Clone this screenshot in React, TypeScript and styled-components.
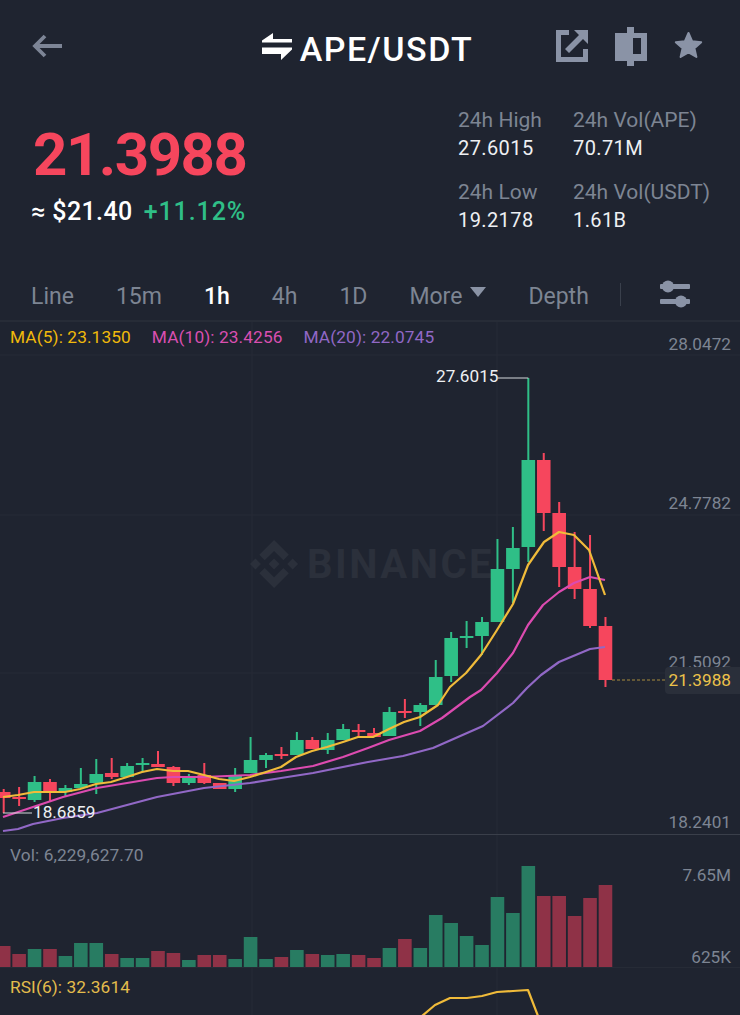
import styled, { createGlobalStyle } from 'styled-components'

const GlobalStyle = createGlobalStyle`
  html, body {
    margin: 0;
    padding: 0;
    background: #1f2430;
  }
`

const GREEN = '#2fbf87'
const RED = '#f6465d'
const VOL_GREEN = '#287c62'
const VOL_RED = '#8f3247'
const GRID = '#262b36'

const Page = styled.div`
  width: 740px;
  height: 1015px;
  overflow: hidden;
  background: #1f2430;
  color: #fff;
  font-family: 'Roboto', sans-serif;
`

const Header = styled.header`
  height: 92px;
  display: grid;
  grid-template-columns: 1fr auto 1fr;
  align-items: center;
  padding: 0 37px 0 32px;
  box-sizing: border-box;
`

const Title = styled.div`
  display: flex;
  align-items: center;
  gap: 8px;
  font-size: 34px;
  font-weight: 500;
  letter-spacing: 1.5px;
`

const TitleText = styled.span`
  margin-top: 6px;
`

const HeaderIcons = styled.div`
  display: flex;
  justify-content: flex-end;
  align-items: center;
  gap: 27px;
`

const Summary = styled.section`
  height: 181px;
  display: flex;
  justify-content: space-between;
  padding: 15px 30px 0 31px;
  box-sizing: border-box;
`

const LastPrice = styled.div`
  font-size: 60px;
  font-weight: 700;
  line-height: 70px;
  margin: 13px 0 0 2px;
  color: ${RED};
  letter-spacing: -1.500px;
`

const PriceSub = styled.div`
  display: flex;
  gap: 11px;
  margin-top: 7px;
  font-size: 25px;
  line-height: 30px;
  font-weight: 500;
`

const Approx = styled.span`
  letter-spacing: 0.4px;
`

const Change = styled.span`
  color: ${GREEN};
  letter-spacing: 0.9px;
`

const Stats = styled.div`
  display: grid;
  grid-template-columns: 115px auto;
  grid-auto-rows: 72px;
`

const Stat = styled.div`
  display: flex;
  flex-direction: column;
  gap: 2px;
`

const StatLabel = styled.span`
  font-size: 21px;
  line-height: 26px;
  color: #7d8593;
`

const StatValue = styled.span`
  font-size: 20px;
  line-height: 26px;
  letter-spacing: 0.4px;
  color: #eef0f3;
`

const Tabs = styled.nav`
  height: 49px;
  display: flex;
  align-items: center;
  gap: 42px;
  padding: 0 0 0 31px;
  box-sizing: border-box;
  border-bottom: 2px solid #272c37;
`

const Tab = styled.span<{ $active?: boolean }>`
  display: flex;
  align-items: center;
  gap: 8px;
  font-size: 23px;
  line-height: 28px;
  color: ${props => (props.$active ? '#fff' : '#7d8593')};
  font-weight: ${props => (props.$active ? 500 : 400)};
`

const Caret = styled.i`
  width: 0;
  height: 0;
  margin-bottom: 10px;
  border-left: 8px solid transparent;
  border-right: 8px solid transparent;
  border-top: 10px solid #8a93a5;
`

const TabDivider = styled.i`
  width: 1px;
  height: 23px;
  margin: -5px 0 0 -11px;
  background: #3a404c;
`

const SettingsSlot = styled.span`
  display: flex;
  margin: -5px 0 0 -3px;
`

const Panel = styled.div<{ $height: number }>`
  position: relative;
  height: ${props => props.$height}px;
`

const ChartSvg = styled.svg`
  display: block;
  width: 740px;
  height: 100%;
  font-family: 'Roboto', sans-serif;
`

const Legend = styled.div<{ $top: number }>`
  position: absolute;
  top: ${props => props.$top}px;
  left: 10px;
  display: flex;
  gap: 21px;
  font-size: 17.300px;
  letter-spacing: 0.1px;
  line-height: 20px;
`

const LegendItem = styled.span<{ $color: string }>`
  color: ${props => props.$color};
`

const PriceTag = styled.span`
  position: absolute;
  top: 345px;
  right: 0;
  width: 75px;
  height: 27px;
  padding-right: 9px;
  box-sizing: border-box;
  text-align: right;
  font-size: 17.200px;
  line-height: 27px;
  color: #ecc24a;
  background: #2a2f3a;
  border-radius: 4px 0 0 4px;
`

const BackIcon = () => (
  <svg width="30" height="24" viewBox="0 0 30 24" fill="none" stroke="#7d8596" strokeWidth="3.800">
    <path d="M13 2 3 12l10 10M3 12h27" />
  </svg>
)

const SwapIcon = () => (
  <svg width="30" height="27" viewBox="0 0 30 27" fill="#fff">
    <path d="M11 0v6h19v3.600H0V7.400zM0 14.400h30v2.200L19 27v-6H0z" />
  </svg>
)

const ShareIcon = () => (
  <svg width="32" height="32" viewBox="0 0 32 32" fill="#8a93a6">
    <path d="M0 0h13v5H5v22h22v-8h5v13H0z" />
    <path d="M18 0H32V14L27 9 13 23 9 19 23 5z" />
  </svg>
)

const CandleIcon = () => (
  <svg width="32" height="39" viewBox="0 0 32 39" fill="#8a93a6">
    <path fillRule="evenodd" d="M12 0h7v6h13v28H19v5h-7v-5H0V6h12zM18 11v16h8V11z" />
  </svg>
)

const StarIcon = () => (
  <svg width="29" height="30" viewBox="0 0 29 30" fill="#8a93a6" stroke="#8a93a6" strokeWidth="2" strokeLinejoin="round">
    <path d="M14.500 2l3.700 8.300 9 .9-6.800 6 2 8.800-7.900-4.600L6.600 26l2-8.800-6.800-6 9-.9z" />
  </svg>
)

const SlidersIcon = () => (
  <svg width="30" height="28" viewBox="0 0 30 28" fill="#8a93a6">
    <rect x="0" y="4" width="30" height="5" rx="1" />
    <rect x="0" y="19" width="30" height="5" rx="1" />
    <circle cx="8" cy="6.500" r="6" />
    <circle cx="21" cy="21.500" r="6" />
  </svg>
)

// [high, body top, body bottom, low, up?] left to right, y in page pixels
type Candle = [number, number, number, number, boolean]

const candles: Candle[] = [
  [789, 792, 798, 813, false],
  [787, 797, 799, 806, false],
  [776, 782, 800, 802, true],
  [779, 782, 792, 802, false],
  [785, 788, 792, 797, true],
  [768, 784, 788, 788, true],
  [759, 774, 783, 794, true],
  [758, 773, 777, 779, false],
  [763, 766, 777, 777, true],
  [758, 763, 765, 771, true],
  [751, 764, 767, 767, false],
  [766, 767, 783, 786, false],
  [774, 777, 783, 785, true],
  [763, 775, 783, 784, false],
  [783, 783, 789, 789, false],
  [768, 776, 789, 792, true],
  [737, 760, 773, 773, true],
  [753, 755, 760, 768, true],
  [747, 754, 756, 759, false],
  [732, 740, 755, 755, true],
  [737, 740, 749, 749, false],
  [733, 740, 750, 754, true],
  [724, 729, 740, 740, true],
  [724, 730, 732, 737, false],
  [728, 733, 737, 737, false],
  [707, 712, 736, 736, true],
  [699, 711, 713, 718, false],
  [703, 705, 712, 726, true],
  [660, 677, 705, 705, true],
  [632, 638, 676, 682, true],
  [621, 636, 638, 648, true],
  [617, 622, 636, 655, true],
  [539, 569, 622, 622, true],
  [527, 548, 569, 603, true],
  [378, 460, 547, 562, true],
  [453, 460, 513, 531, false],
  [502, 513, 567, 587, false],
  [532, 567, 589, 599, false],
  [535, 589, 626, 628, false],
  [617, 626, 680, 687, false],
]

// bar top y per candle, with its own up/down flag
const volumes: [number, boolean][] = [
  [946, false], [954, false], [949, true], [949, false], [956, true], [943, true], [943, true], [954, false],
  [958, true], [958, true], [951, false], [953, false], [960, true], [955, false], [955, false], [959, true],
  [937, true], [959, true], [957, false], [950, true], [954, false], [955, true], [954, true], [955, false],
  [958, false], [948, true], [939, false], [948, true], [915, true], [923, true], [936, true], [945, true],
  [897, true], [913, true], [866, true], [896, false], [896, false], [916, false], [898, false], [885, false],
]

const ma5 = '3,797 18,795 34,792 49,792 65,792 80,789 96,784 111,782 127,777 142,772 157,769 173,771 188,771 204,775 219,779 234,781 250,777 266,772 281,767 296,757 312,751 327,747 343,742 358,737 373,737 389,729 404,722 420,717 438,705 450,687 466,673 481,655 497,630 513,604 528,565 544,542 559,532 574,535 589,550 605,595'
const ma10 = '3,817 33,807 63,797 97,788 127,783 157,778 173,777 204,777 227,776 250,775 281,771 313,766 343,757 368,748 389,740 420,731 442,718 470,697 481,690 497,673 513,653 528,625 543,605 559,592 574,583 590,577 605,580'
const ma20 = '3,831 18,829 33,824 63,818 97,813 127,805 157,797 204,788 250,783 281,778 313,773 368,762 403,756 433,748 458,737 483,726 513,703 527,688 541,675 559,662 590,649 605,647'
const rsi = '422,1016 435,1005 450,998 467,998 482,996 497,992 513,991 528,990 538,1016'

const candleX = (i: number) => 3.7 + 15.43 * i

const GridLines = ({ top, bottom }: { top: number; bottom: number }) => (
  <>
    <line x1="252" x2="252" y1={top} y2={bottom} stroke={GRID} />
    <line x1="497" x2="497" y1={top} y2={bottom} stroke={GRID} />
  </>
)

const AxisLabel = ({ y, children }: { y: number; children: string }) => (
  <text x="731" y={y} textAnchor="end" fontSize="17.200" fill="#7d8593">{children}</text>
)

const MainChart = () => (
  <ChartSvg viewBox="0 322 740 512">
    <GridLines top={322} bottom={834} />
    <line x1="0" x2="740" y1="355" y2="355" stroke={GRID} />
    <line x1="0" x2="740" y1="515" y2="515" stroke={GRID} />
    <line x1="0" x2="740" y1="673" y2="673" stroke={GRID} />

    <g fill="#2b303b">
      <g transform="translate(250 540) scale(0.38)">
        <path d="M38.730 53.200l24.590-24.580 24.600 24.600 14.300-14.310L63.320 0 24.430 38.900z" />
        <path d="M0 63.310l14.300-14.310 14.310 14.310-14.310 14.300z" />
        <path d="M38.730 73.410l24.590 24.590 24.600-24.600 14.310 14.290-38.900 38.910-38.910-38.880z" />
        <path d="M98 63.310l14.300-14.310 14.310 14.300-14.310 14.310z" />
        <path d="M77.830 63.300L63.320 48.780 52.590 59.510l-1.240 1.230-2.540 2.540 14.510 14.500 14.510-14.470z" />
      </g>
      <text x="307" y="578" fontSize="40" fontWeight="700" letterSpacing="2.500">BINANCE</text>
    </g>

    {candles.map(([high, top, bottom, low, up], i) => (
      <g key={i} fill={up ? GREEN : RED}>
        <rect x={candleX(i) - 1} y={high} width="2" height={low - high} />
        <rect x={candleX(i) - 6.800} y={top} width="13.600" height={bottom - top} />
      </g>
    ))}

    <g fill="none" strokeWidth="2.200" strokeLinejoin="round">
      <polyline points={ma20} stroke="#9168c6" />
      <polyline points={ma10} stroke="#dc4bb0" />
      <polyline points={ma5} stroke="#f0bb3a" />
    </g>

    <path d="M498 378h30.300" fill="none" stroke="#d5d8dc" strokeWidth="1" />
    <path d="M3 813h29" fill="none" stroke="#d5d8dc" strokeWidth="1" />
    <text x="436" y="382" fontSize="17.200" fill="#eef0f3">27.6015</text>
    <text x="33" y="818" fontSize="17.200" fill="#eef0f3">18.6859</text>

    <line x1="612" x2="665" y1="680" y2="680" stroke="#a98c3c" strokeDasharray="3 2" />

    <AxisLabel y={350}>28.0472</AxisLabel>
    <AxisLabel y={509}>24.7782</AxisLabel>
    <AxisLabel y={668}>21.5092</AxisLabel>
    <AxisLabel y={828}>18.2401</AxisLabel>
  </ChartSvg>
)

const VolumeChart = () => (
  <ChartSvg viewBox="0 834 740 134">
    <GridLines top={834} bottom={968} />
    <line x1="0" x2="740" y1="834.500" y2="834.500" stroke="#3a3f4a" />
    {volumes.map(([top, up], i) => (
      <rect
        key={i}
        x={candleX(i) - 6.800}
        y={top}
        width="13.600"
        height={968 - top}
        fill={up ? VOL_GREEN : VOL_RED}
      />
    ))}
    <AxisLabel y={881}>7.65M</AxisLabel>
    <AxisLabel y={963}>625K</AxisLabel>
    <line x1="0" x2="740" y1="967.500" y2="967.500" stroke={GRID} />
  </ChartSvg>
)

const RsiChart = () => (
  <ChartSvg viewBox="0 968 740 47">
    <GridLines top={968} bottom={1015} />
    <polyline points={rsi} fill="none" stroke="#f0bb3a" strokeWidth="2.200" strokeLinejoin="round" />
  </ChartSvg>
)

const stats = [
  ['24h High', '27.6015'],
  ['24h Vol(APE)', '70.71M'],
  ['24h Low', '19.2178'],
  ['24h Vol(USDT)', '1.61B'],
]

const App = () => (
  <Page>
    <GlobalStyle />
    <Header>
      <BackIcon />
      <Title>
        <SwapIcon />
        <TitleText>APE/USDT</TitleText>
      </Title>
      <HeaderIcons>
        <ShareIcon />
        <CandleIcon />
        <StarIcon />
      </HeaderIcons>
    </Header>

    <Summary>
      <div>
        <LastPrice>21.3988</LastPrice>
        <PriceSub>
          <Approx>≈ $21.40</Approx>
          <Change>+11.12%</Change>
        </PriceSub>
      </div>
      <Stats>
        {stats.map(([label, value]) => (
          <Stat key={label}>
            <StatLabel>{label}</StatLabel>
            <StatValue>{value}</StatValue>
          </Stat>
        ))}
      </Stats>
    </Summary>

    <Tabs>
      <Tab>Line</Tab>
      <Tab>15m</Tab>
      <Tab $active>1h</Tab>
      <Tab>4h</Tab>
      <Tab>1D</Tab>
      <Tab>More<Caret /></Tab>
      <Tab>Depth</Tab>
      <TabDivider />
      <SettingsSlot><SlidersIcon /></SettingsSlot>
    </Tabs>

    <Panel $height={512}>
      <MainChart />
      <Legend $top={5}>
        <LegendItem $color="#f0b90b">MA(5): 23.1350</LegendItem>
        <LegendItem $color="#d94fb0">MA(10): 23.4256</LegendItem>
        <LegendItem $color="#9168c6">MA(20): 22.0745</LegendItem>
      </Legend>
      <PriceTag>21.3988</PriceTag>
    </Panel>

    <Panel $height={134}>
      <VolumeChart />
      <Legend $top={11}>
        <LegendItem $color="#7d8593">Vol: 6,229,627.70</LegendItem>
      </Legend>
    </Panel>

    <Panel $height={47}>
      <RsiChart />
      <Legend $top={9}>
        <LegendItem $color="#e3bc4c">RSI(6): 32.3614</LegendItem>
      </Legend>
    </Panel>
  </Page>
)

export default App
